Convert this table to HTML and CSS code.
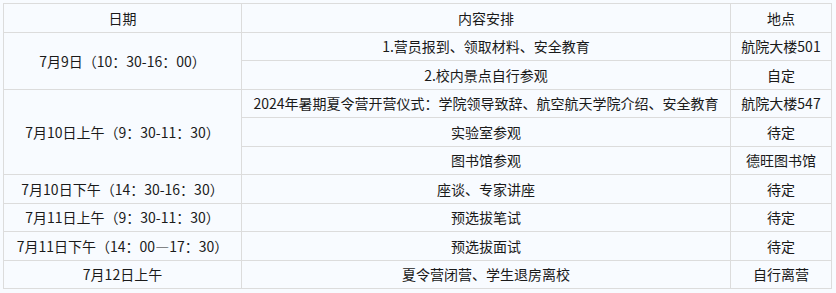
FILE: index.html
```html
<!DOCTYPE html>
<html lang="zh-CN">
<head>
<meta charset="utf-8">
<link rel="stylesheet" href="styles.css">
</head>
<body>
<table class="schedule">
  <colgroup>
    <col class="c-date">
    <col class="c-content">
    <col class="c-place">
  </colgroup>
  <tr><td>日期</td><td>内容安排</td><td>地点</td></tr>
  <tr><td rowspan="2">7月9日（10：30-16：00）</td><td>1.营员报到、领取材料、安全教育</td><td>航院大楼501</td></tr>
  <tr><td>2.校内景点自行参观</td><td>自定</td></tr>
  <tr><td rowspan="3">7月10日上午（9：30-11：30）</td><td>2024年暑期夏令营开营仪式：学院领导致辞、航空航天学院介绍、安全教育</td><td>航院大楼547</td></tr>
  <tr><td>实验室参观</td><td>待定</td></tr>
  <tr><td>图书馆参观</td><td>德旺图书馆</td></tr>
  <tr><td>7月10日下午（14：30-16：30）</td><td>座谈、专家讲座</td><td>待定</td></tr>
  <tr><td>7月11日上午（9：30-11：30）</td><td>预选拔笔试</td><td>待定</td></tr>
  <tr><td>7月11日下午（14：00—17：30）</td><td>预选拔面试</td><td>待定</td></tr>
  <tr><td>7月12日上午</td><td>夏令营闭营、学生退房离校</td><td>自行离营</td></tr>
</table>
</body>
</html>
```
FILE: styles.css
```css
html, body {
  margin: 0;
  background: #f8fbff;
}
body {
  padding: 3px;
  font-family: "Microsoft YaHei", "Noto Sans CJK SC", "Noto Sans", sans-serif;
  font-size: 14px;
  color: #1a1a1a;
}
.schedule {
  border-collapse: collapse;
  table-layout: fixed;
  width: 828px;
}
.c-date { width: 238px; }
.c-content { width: 489px; }
.c-place { width: 101px; }
.schedule tr {
  height: 28.5px;
}
.schedule td {
  border: 1px solid #dcdcdc;
  padding: 0 4px;
  text-align: center;
  vertical-align: middle;
  line-height: 20px;
  white-space: nowrap;
}
```
